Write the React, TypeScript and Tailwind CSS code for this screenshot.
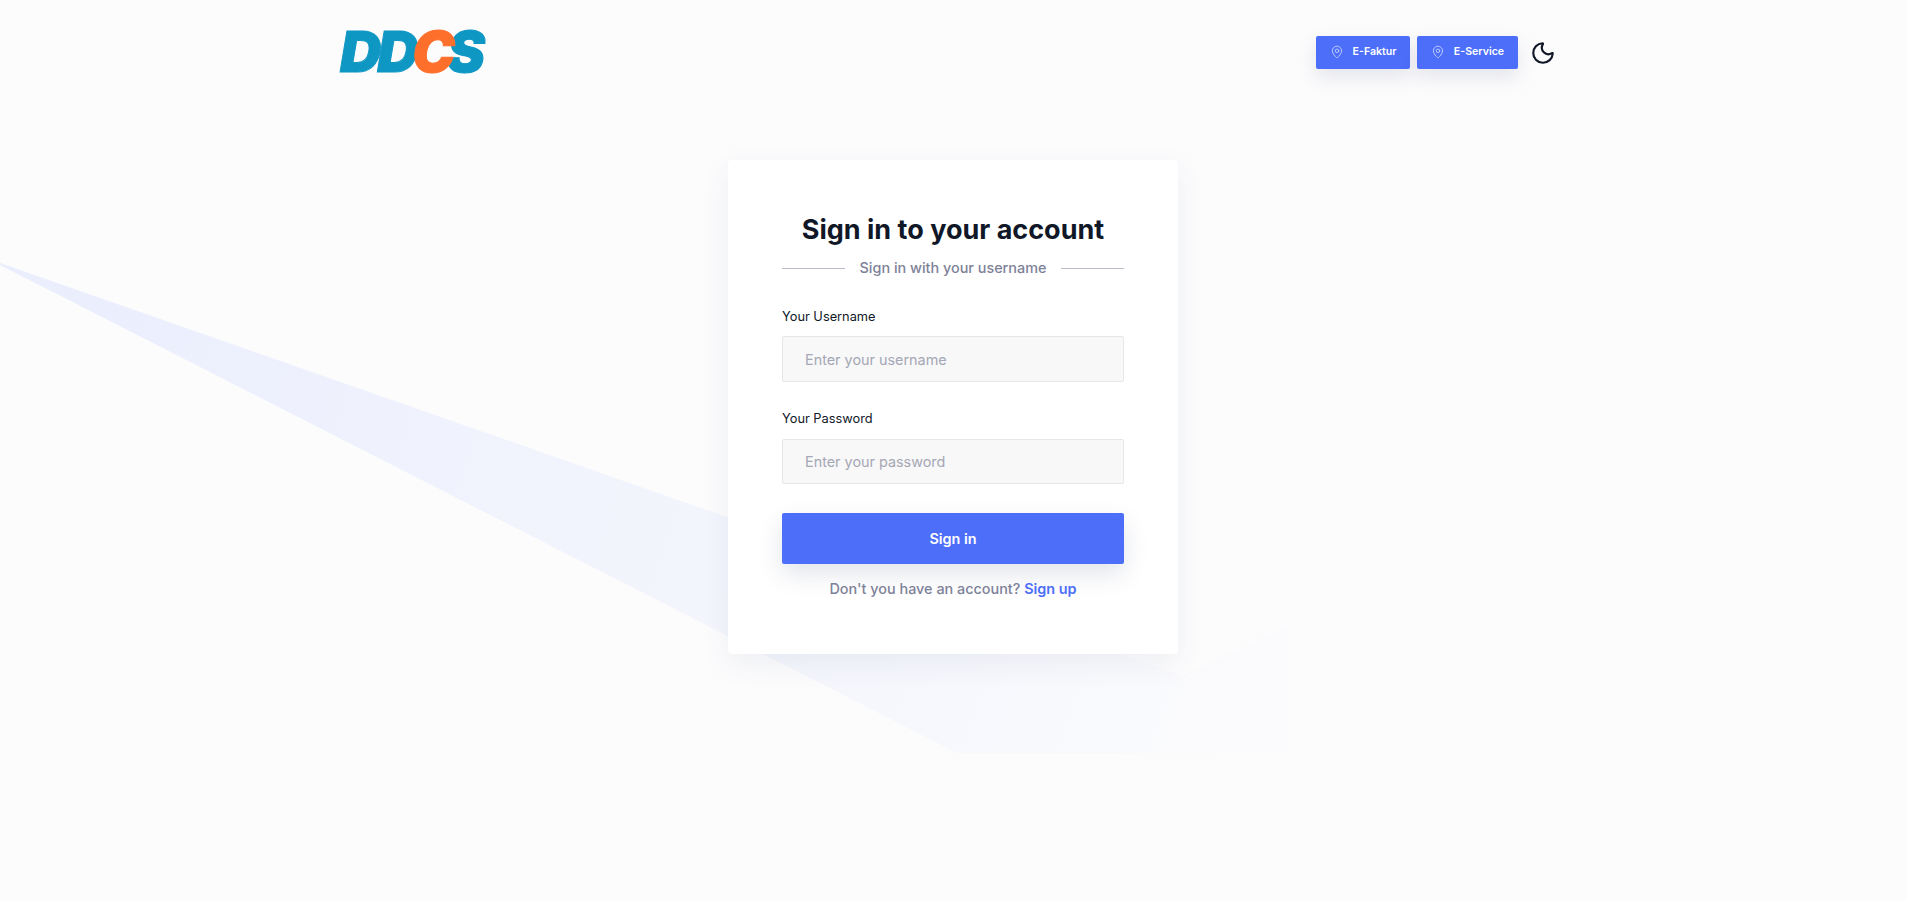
import React from 'react';
import { MapPin, Moon } from 'lucide-react';

const font = { fontFamily: 'Inter, "Liberation Sans", sans-serif' };

const LinkButton: React.FC<{ label: string; width: string }> = ({ label, width }) => (
  <a className={`flex h-[33px] ${width} items-center justify-center gap-[9px] rounded-[2px] bg-[#4c6ef9] text-[10.6px] font-semibold text-white shadow-[0_8px_20px_rgba(60,70,110,0.13)]`}>
    <MapPin className="h-[14px] w-[14px] text-[#c9d4fd]" strokeWidth={1.5} />
    <span>{label}</span>
  </a>
);

const Logo = () => (
  <div className="mb-[2px] flex h-[46px] items-center text-[57px] leading-none font-black italic tracking-[-2px] text-[#0f97c4] [-webkit-text-stroke:1px_currentColor]">
    <span>D</span>
    <span className="-ml-[2px]">D</span>
    <span className="z-10 -ml-[4px] text-[#ff6f2c]">C</span>
    <span className="-ml-[6px]">S</span>
  </div>
);

const Field: React.FC<{ label: string; placeholder: string; type?: string; gap: string; height: string }> = ({
  label,
  placeholder,
  type = 'text',
  gap,
  height,
}) => (
  <div className="mt-[27px]">
    <label className={`block ${gap} text-[12.8px] leading-[20px] text-[#101828]`}>{label}</label>
    <input
      type={type}
      placeholder={placeholder}
      className={`block ${height} w-full rounded-[2px] border border-[#e6e6e8] bg-[#f8f8f9] px-[22px] text-[14.4px] text-[#101828] outline-none placeholder:text-[#a5a7b4]`}
    />
  </div>
);

export default function App() {
  return (
    <div style={font} className="relative h-[901px] overflow-hidden bg-[#fcfcfd]">
      {/* background swoosh */}
      <svg className="absolute top-0 left-0" width="1906" height="901" viewBox="0 0 1906 901" fill="none">
        <defs>
          <linearGradient id="swoosh" gradientUnits="userSpaceOnUse" x1="0" y1="263" x2="1289" y2="700">
            <stop offset="0" stopColor="#4c6ef9" stopOpacity="0.105" />
            <stop offset="0.55" stopColor="#4c6ef9" stopOpacity="0.05" />
            <stop offset="1" stopColor="#4c6ef9" stopOpacity="0.005" />
          </linearGradient>
        </defs>
        <polygon points="0,263 1182,676 1289,625 1289,753 957,753 0,265" fill="url(#swoosh)" />
      </svg>

      <div className="relative">
        <header className="mx-auto flex h-[104px] w-[1226px] items-center justify-between">
          <Logo />
          <div className="mr-[10px] flex items-center">
            <LinkButton label="E-Faktur" width="w-[94px]" />
            <div className="w-[7px]" />
            <LinkButton label="E-Service" width="w-[101px]" />
            <Moon className="mt-[2px] ml-[12px] h-[26px] w-[26px] text-[#101828]" strokeWidth={2} />
          </div>
        </header>

        <main className="mt-[56px] flex justify-center">
          <div className="h-[494px] w-[450px] rounded-[4px] bg-white px-[54px] pt-[52px] shadow-[0_10px_30px_rgba(60,70,110,0.07)]">
            <h1 className="text-center text-[27px] leading-[36px] font-bold text-[#101828]">Sign in to your account</h1>
            <div className="mt-[8px] flex items-center justify-between">
              <span className="h-px w-[63px] bg-[#b9bcc8]" />
              <span className="text-[14.4px] leading-[24px] font-medium text-[#7e8299]">Sign in with your username</span>
              <span className="h-px w-[63px] bg-[#b9bcc8]" />
            </div>
            <Field label="Your Username" placeholder="Enter your username" gap="mb-[9px]" height="h-[46px]" />
            <Field label="Your Password" type="password" placeholder="Enter your password" gap="mb-[10px]" height="h-[45px]" />
            <button className="mt-[29px] h-[51px] w-full rounded-[2px] bg-[#4c6ef9] text-[14.4px] font-semibold text-white shadow-[0_10px_24px_rgba(60,70,110,0.14)]">
              Sign in
            </button>
            <p className="mt-[13px] text-center text-[14.4px] leading-[24px] font-medium text-[#7e8299]">
              Don't you have an account? <a className="font-semibold text-[#4c6ef9]">Sign up</a>
            </p>
          </div>
        </main>
      </div>
    </div>
  );
}
